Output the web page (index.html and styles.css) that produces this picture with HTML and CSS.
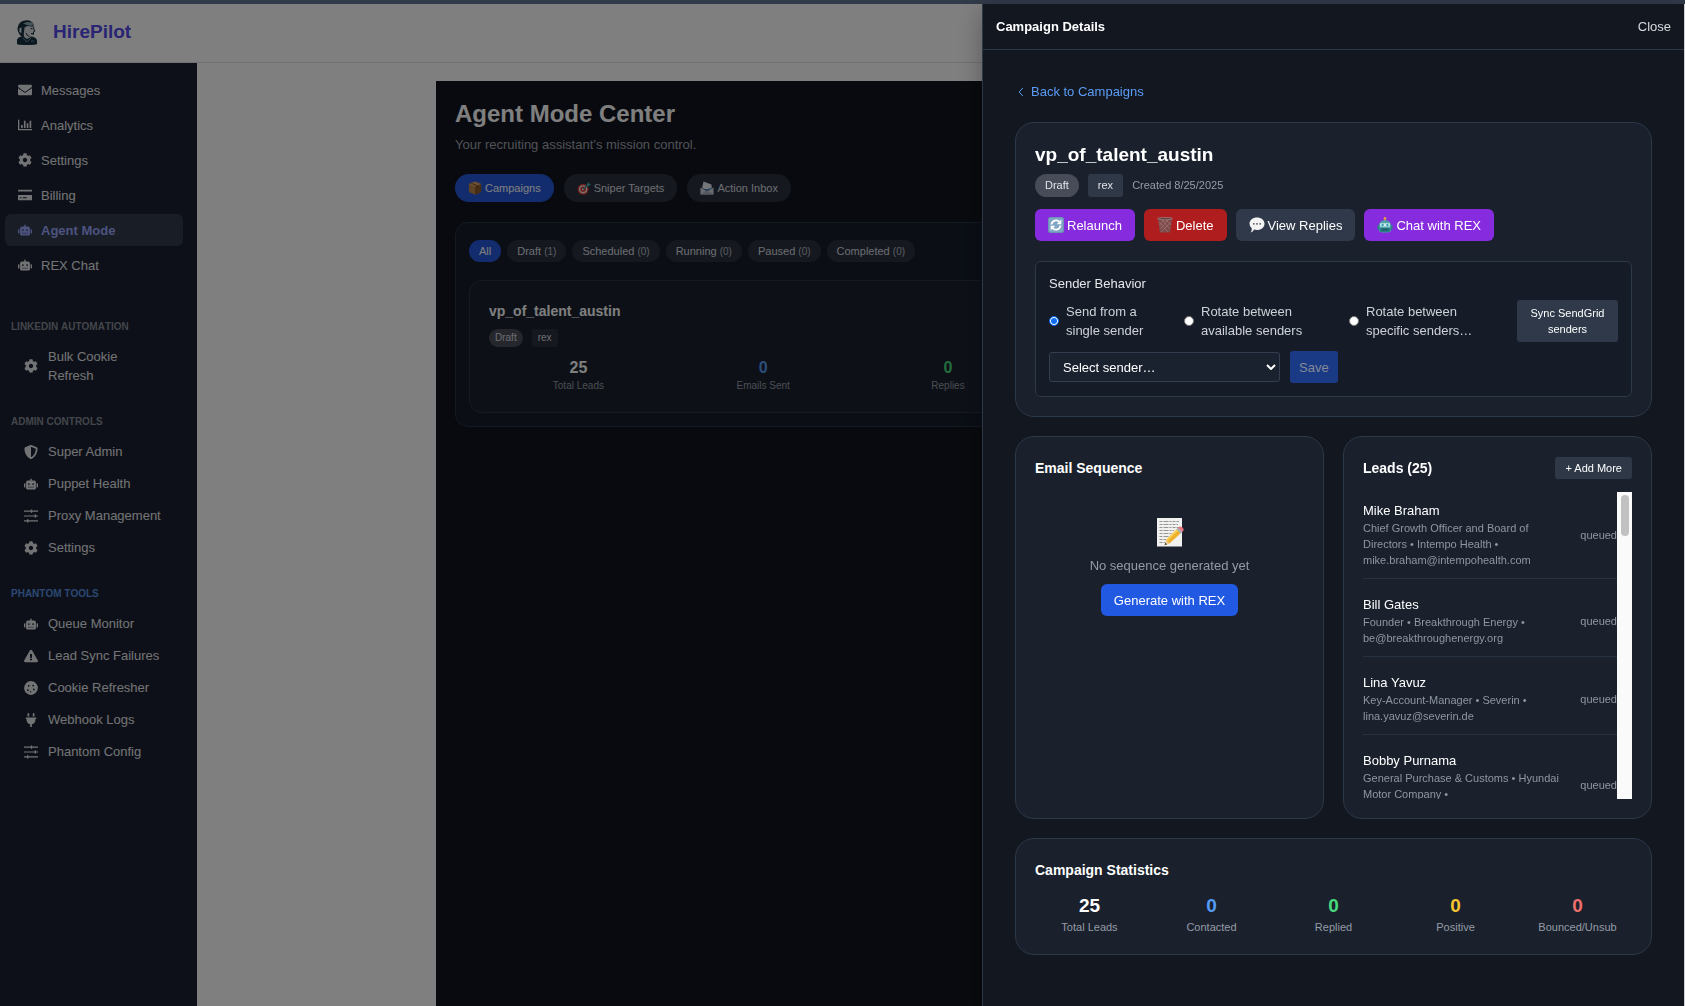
FILE: index.html
```html
<!DOCTYPE html>
<html lang="en">
<head>
<meta charset="utf-8">
<meta name="viewport" content="width=device-width, initial-scale=1">
<title>HirePilot – Agent Mode</title>
<link rel="stylesheet" href="styles.css">
</head>
<body>
<svg class="sprite" aria-hidden="true">
  <symbol id="i-mail" viewBox="0 0 512 512"><path d="M502.3 190.8c3.9-3.1 9.7-.2 9.7 4.7V400c0 26.5-21.5 48-48 48H48c-26.5 0-48-21.5-48-48V195.6c0-5 5.7-7.8 9.7-4.7 22.4 17.4 52.1 39.5 154.1 113.6 21.1 15.4 56.7 47.8 92.2 47.6 35.7.3 72-32.8 92.3-47.6 102-74.1 131.6-96.3 154-113.7zM256 320c23.2.4 56.6-29.2 73.4-41.4 132.7-96.3 142.8-104.7 173.4-128.7 5.8-4.5 9.2-11.5 9.2-18.9v-19c0-26.5-21.5-48-48-48H48c-26.5 0-48 21.5-48 48v19c0 7.4 3.4 14.3 9.2 18.9 30.6 23.9 40.7 32.4 173.4 128.7 16.8 12.2 50.2 41.8 73.4 41.4z"/></symbol>
  <symbol id="i-chart" viewBox="0 0 512 512"><path d="M0 64h48v336h464v48H24a24 24 0 0 1-24-24zM112 256h60v108h-60zM216 96h60v268h-60zM320 192h60v172h-60zM424 96h60v268h-60z"/></symbol>
  <symbol id="i-cog" viewBox="0 0 512 512"><path d="M487.4 315.7l-42.6-24.6c4.3-23.2 4.3-47 0-70.2l42.6-24.6c4.9-2.8 7.1-8.6 5.5-14-11.1-35.6-30-67.8-54.7-94.6-3.8-4.1-10-5.1-14.8-2.3L380.8 110c-17.9-15.4-38.5-27.3-60.8-35.1V25.8c0-5.6-3.9-10.5-9.4-11.7-36.7-8.2-74.3-7.8-109.2 0-5.5 1.2-9.4 6.1-9.4 11.7V75c-22.2 7.9-42.8 19.8-60.8 35.1L88.7 85.5c-4.9-2.8-11-1.9-14.8 2.3-24.7 26.7-43.6 58.9-54.7 94.6-1.7 5.4.6 11.2 5.5 14L67.3 221c-4.3 23.2-4.3 47 0 70.2l-42.6 24.6c-4.9 2.8-7.1 8.6-5.5 14 11.1 35.6 30 67.8 54.7 94.6 3.8 4.1 10 5.1 14.8 2.3l42.6-24.6c17.9 15.4 38.5 27.3 60.8 35.1v49.2c0 5.6 3.9 10.5 9.4 11.7 36.7 8.2 74.3 7.8 109.2 0 5.5-1.2 9.4-6.1 9.4-11.7v-49.2c22.2-7.9 42.8-19.8 60.8-35.1l42.6 24.6c4.9 2.8 11 1.9 14.8-2.3 24.7-26.7 43.6-58.9 54.7-94.6 1.5-5.5-.7-11.3-5.6-14.1zM256 336c-44.1 0-80-35.9-80-80s35.9-80 80-80 80 35.9 80 80-35.9 80-80 80z"/></symbol>
  <symbol id="i-card" viewBox="0 0 512 512"><path fill-rule="evenodd" d="M24 64h464a24 24 0 0 1 24 24v40H0V88a24 24 0 0 1 24-24zM0 256h512v168a24 24 0 0 1-24 24H24a24 24 0 0 1-24-24zM64 336v38h64v-38zM172 336v38h148v-38z"/></symbol>
  <symbol id="i-robot" viewBox="0 0 640 512"><path d="M32,224H64V416H32A32,32,0,0,1,0,384V256A32,32,0,0,1,32,224Zm512-48V448a64,64,0,0,1-64,64H160a64,64,0,0,1-64-64V176a80,80,0,0,1,80-80H288V32a32,32,0,0,1,64,0V96H464A80,80,0,0,1,544,176ZM264,256a40,40,0,1,0-40,40A40,40,0,0,0,264,256Zm-8,128H192v32h64Zm96,0H288v32h64ZM456,256a40,40,0,1,0-40,40A40,40,0,0,0,456,256Zm-8,128H384v32h64ZM640,256V384a32,32,0,0,1-32,32H576V224h32A32,32,0,0,1,640,256Z"/></symbol>
  <symbol id="i-shield" viewBox="0 0 512 512"><path d="M466.5 83.7l-192-80a48.15 48.15 0 0 0-36.9 0l-192 80C27.7 91.1 16 108.6 16 128c0 198.5 114.5 335.7 221.5 380.3 11.8 4.9 25.1 4.9 36.9 0C360.1 472.6 496 349.3 496 128c0-19.4-11.7-36.9-29.5-44.3zM256.1 446.3l-.1-381 175.9 73.3c-3.3 151.4-82.1 261.1-175.8 307.7z"/></symbol>
  <symbol id="i-sliders" viewBox="0 0 14 14"><path d="M0 1.6h14v1.2H0zM0 6.4h14v1.2H0zM0 11.2h14v1.2H0zM6.8 0.6h1.4v3.2H6.8zM10.6 5.4H12v3.2h-1.4zM3 10.2h1.4v3.2H3z"/></symbol>
  <symbol id="i-warn" viewBox="0 0 576 512"><path fill-rule="evenodd" d="M569.5 440c18.500 32-4.700 72-41.600 72H48c-36.900 0-60-40-41.600-72L246.400 24c18.500-32 64.700-32 83.200 0zM288 354a46 46 0 1 0 0 92 46 46 0 0 0 0-92zm-43.700-165.300l7.400 136c.4 6.300 5.700 11.300 12 11.300h48.600c6.300 0 11.600-5 12-11.300l7.400-136c.4-6.800-5-12.700-12-12.700h-63.400c-6.900 0-12.400 5.900-12 12.700z"/></symbol>
  <symbol id="i-cookie" viewBox="0 0 512 512"><path fill-rule="evenodd" d="M256 2 370 30 460 110 508 210 500 320 440 420 340 490 230 510 120 470 40 390 4 280 18 170 80 75 160 20ZM176 144a32 32 0 1 0 0 64 32 32 0 0 0 0-64zm-32 160a32 32 0 1 0 0 64 32 32 0 0 0 0-64zm96 64a24 24 0 1 0 0 48 24 24 0 0 0 0-48zm96-232a32 32 0 1 0 0 64 32 32 0 0 0 0-64zm24 140a32 32 0 1 0 0 64 32 32 0 0 0 0-64z"/></symbol>
  <symbol id="i-plug" viewBox="0 0 384 512"><path d="M320 32a32 32 0 0 0-64 0v96h64zM368 160H16a16 16 0 0 0-16 16v32a16 16 0 0 0 16 16h16v32a160 160 0 0 0 128 156.800V512h64v-99.200A160 160 0 0 0 352 256v-32h16a16 16 0 0 0 16-16v-32a16 16 0 0 0-16-16zM128 32a32 32 0 0 0-64 0v96h64z"/></symbol>
</svg>

<div class="app">
  <header class="topbar">
    <svg class="logo" viewBox="0 0 20 25" aria-hidden="true">
      <path fill="#16303f" d="M0 24v-3.500q0-2.500 3-3.500l3.500-1.500 4 2 4-1q5 .8 5.500 4V24q-1 1-10 1t-10-1z"/>
      <path fill="#d8dcde" d="M5 7q4-2.500 9-1.500l2.500 1 .5 3 1 2-1.200.8-.3 3.200h-3l-.5 2-3 1.500L5 15.500z"/>
      <path fill="#16303f" d="M.6 8Q1.500 1 9 .2q6-.4 7.800 4.500l-.6 2-6-.6-2.600 1.400-.9 6.500.5 3Q3 16.500 1.800 13q-1.500-2-1.200-5z"/>
      <path fill="#8fa9b5" d="M6 3.500 10 2l6 .6.800 2.200-3 1.200-4-1z"/>
      <path fill="#d8dcde" d="M2.500 8 4.500 7.500 4.300 13l-2-1z"/>
      <path fill="none" stroke="#16303f" d="M13.500 8.700h2M14 13.700h2.500M9 13q1 3 3.500 3.500M16.800 7v2l1 2.200-1.200.6-.3 3"/>
      <path fill="none" stroke="#7c98a6" stroke-width=".8" d="m6 18 4 4 4-4M14 21h3"/>
    </svg>
    <span class="brand">HirePilot</span>
  </header>
  <div class="body">
    <nav class="sidebar" aria-label="Main">
      <div class="nav-main">
        <a href="#"><svg class="ico"><use href="#i-mail"/></svg>Messages</a>
        <a href="#"><svg class="ico"><use href="#i-chart"/></svg>Analytics</a>
        <a href="#"><svg class="ico"><use href="#i-cog"/></svg>Settings</a>
        <a href="#"><svg class="ico"><use href="#i-card"/></svg>Billing</a>
        <a href="#" class="active"><svg class="ico"><use href="#i-robot"/></svg>Agent Mode</a>
        <a href="#"><svg class="ico"><use href="#i-robot"/></svg>REX Chat</a>
      </div>
      <section class="nav-group">
        <h2>LINKEDIN AUTOMATION</h2>
        <a href="#"><svg class="ico"><use href="#i-cog"/></svg>Bulk Cookie Refresh</a>
      </section>
      <section class="nav-group">
        <h2>ADMIN CONTROLS</h2>
        <a href="#"><svg class="ico"><use href="#i-shield"/></svg>Super Admin</a>
        <a href="#"><svg class="ico"><use href="#i-robot"/></svg>Puppet Health</a>
        <a href="#"><svg class="ico"><use href="#i-sliders"/></svg>Proxy Management</a>
        <a href="#"><svg class="ico"><use href="#i-cog"/></svg>Settings</a>
      </section>
      <section class="nav-group phantom">
        <h2>PHANTOM TOOLS</h2>
        <a href="#"><svg class="ico"><use href="#i-robot"/></svg>Queue Monitor</a>
        <a href="#"><svg class="ico"><use href="#i-warn"/></svg>Lead Sync Failures</a>
        <a href="#"><svg class="ico"><use href="#i-cookie"/></svg>Cookie Refresher</a>
        <a href="#"><svg class="ico"><use href="#i-plug"/></svg>Webhook Logs</a>
        <a href="#"><svg class="ico"><use href="#i-sliders"/></svg>Phantom Config</a>
      </section>
    </nav>
    <main class="main">
      <div class="center">
        <h1>Agent Mode Center</h1>
        <p class="subtitle">Your recruiting assistant’s mission control.</p>
        <div class="tabs">
          <button class="tab on" type="button"><svg class="emo" viewBox="0 0 16 16"><path fill="#b98249" d="m1 3.500 7-3 7 3v9l-7 3.300-7-3.300z"/><path fill="#8c5a2c" d="m8 6.500 7-3v9l-7 3.300z"/><path fill="#d3a069" d="m1 3.500 7-3 7 3-7 3z"/><path fill="#6f4420" d="m4 2.200 7.200 3v3L10 8.700V5.600L2.800 2.700z"/></svg>Campaigns</button>
          <button class="tab" type="button"><svg class="emo" viewBox="0 0 16 16"><circle cx="7" cy="9.500" r="6.300" fill="#d63a34"/><circle cx="7" cy="9.500" r="4.700" fill="#f4e9e6"/><circle cx="7" cy="9.500" r="3.200" fill="#d63a34"/><circle cx="7" cy="9.500" r="1.300" fill="#fff"/><path stroke="#2c8f96" stroke-width="1.600" d="m7 9.500 6-5.500"/><path fill="#39b3b3" d="m11 4 2.500-3 .5 2 2 .3-3 3z"/></svg>Sniper Targets</button>
          <button class="tab" type="button"><svg class="emo" viewBox="0 0 16 16"><path fill="#e8edf2" d="m4 .5 9 3.500 1 6H2z"/><path fill="#3c78b4" d="M2 7.500q5 4 12-.5l-1 4H3z"/><path fill="#d3d8de" d="M.5 7.500l7.500 4.500 7.500-4.500v8H.5z"/><path fill="#aab1ba" d="m.5 15.500 7.500-5 7.500 5z"/></svg>Action Inbox</button>
        </div>
        <section class="panel">
          <div class="filters">
            <button class="chip on" type="button">All</button>
            <button class="chip" type="button">Draft <small>(1)</small></button>
            <button class="chip" type="button">Scheduled <small>(0)</small></button>
            <button class="chip" type="button">Running <small>(0)</small></button>
            <button class="chip" type="button">Paused <small>(0)</small></button>
            <button class="chip" type="button">Completed <small>(0)</small></button>
          </div>
          <article class="campaign">
            <h2>vp_of_talent_austin</h2>
            <div class="tags"><span class="tag round">Draft</span><span class="tag">rex</span></div>
            <dl class="stats small">
              <div><dd>25</dd><dt>Total Leads</dt></div>
              <div><dd class="blue">0</dd><dt>Emails Sent</dt></div>
              <div><dd class="green">0</dd><dt>Replies</dt></div>
            </dl>
          </article>
        </section>
      </div>
    </main>
  </div>
</div>

<div class="backdrop"></div>

<aside class="drawer" aria-label="Campaign Details">
  <header class="drawer-head"><strong>Campaign Details</strong><button class="close" type="button">Close</button></header>
  <div class="drawer-body">
    <a class="back" href="#"><svg viewBox="0 0 6 10"><path d="M4.800 1 1.200 5l3.600 4"/></svg>Back to Campaigns</a>

    <section class="card">
      <h2 class="name">vp_of_talent_austin</h2>
      <div class="meta"><span class="badge round">Draft</span><span class="badge">rex</span><span>Created 8/25/2025</span></div>
      <div class="actions">
        <button class="btn purple" type="button"><svg class="emo" viewBox="0 0 16 16"><rect width="16" height="16" rx="2.500" fill="#6d93b4"/><rect x="1" y="1" width="14" height="14" rx="2" fill="#7fa6c6"/><path fill="none" stroke="#fff" stroke-width="1.800" d="M3.500 7.500A4.600 4.600 0 0 1 11.500 5M12.500 8.500A4.600 4.600 0 0 1 4.500 11"/><path fill="#fff" d="M13.300 2.600v4.600H8.700zM2.700 13.400V8.800h4.600z"/></svg>Relaunch</button>
        <button class="btn red" type="button"><svg class="emo" viewBox="0 0 16 16"><path fill="#7d4b4b" d="M1 1.500h14l-1.800 14H2.800z"/><path stroke="#b08585" stroke-width=".5" d="m2 5 9 10M5 3l8 9M9 3l5 5M14 5 4 15M11 3l-8 9M7 3 2.500 8"/><ellipse cx="8" cy="1.600" rx="7.500" ry="1.200" fill="#5f4444" stroke="#a98484" stroke-width=".7"/></svg>Delete</button>
        <button class="btn slate" type="button"><svg class="emo" viewBox="0 0 16 16"><path fill="#f3f3f3" d="M8 .5c4.300 0 7.500 2.700 7.500 6.200S12.300 13 8 13c-1 0-2-.1-2.800-.4Q4 15 1.500 15.500 3 13.500 2.800 11.400 .5 9.700.5 6.700C.5 3.200 3.700.5 8 .5z"/><g fill="#555"><circle cx="4.800" cy="6.800" r=".9"/><circle cx="8" cy="6.800" r=".9"/><circle cx="11.200" cy="6.800" r=".9"/></g></svg>View Replies</button>
        <button class="btn purple" type="button"><svg class="emo" viewBox="0 0 16 16"><path fill="#c8873a" d="M7.300 1h1.400v3H7.300z"/><circle cx="8" cy="1.400" r="1.300" fill="#e4a03c"/><path fill="#4fa3a8" d="M2 8Q2.500 3.200 8 3.200T14 8v6q-1 1.600-6 1.600T2 14z"/><path fill="#2b7f86" d="M.5 8h1.700v4.500H.5zM13.800 8h1.700v4.500h-1.700zM2.500 11h11v3q-1 1.200-5.500 1.200T2.500 14z"/><path fill="#cfeff0" d="M3.200 6.300h9.600v3.300H3.200z"/><g fill="#3a9fb0"><circle cx="5.600" cy="8" r="1.200"/><circle cx="10.400" cy="8" r="1.200"/></g><path fill="#1d5a68" d="M4.500 11.800h7v1.600h-7z"/></svg>Chat with REX</button>
      </div>
      <form class="sender">
        <h3>Sender Behavior</h3>
        <div class="sender-row">
          <label><input type="radio" name="mode" checked><span>Send from a single sender</span></label>
          <label><input type="radio" name="mode"><span>Rotate between available senders</span></label>
          <label><input type="radio" name="mode"><span>Rotate between specific senders…</span></label>
          <button class="sync" type="button">Sync SendGrid senders</button>
        </div>
        <div class="sender-pick">
          <div class="select"><select aria-label="Sender"><option>Select sender…</option></select><svg viewBox="0 0 10 6"><path d="m1 1 4 4 4-4"/></svg></div>
          <button class="save" type="submit" disabled>Save</button>
        </div>
      </form>
    </section>

    <div class="cols">
      <section class="card">
        <h3 class="card-title">Email Sequence</h3>
        <div class="empty">
          <svg viewBox="0 0 28 30" aria-hidden="true"><path fill="#f1f1ef" d="M1 1h25v28.500H1z"/><path stroke="#8b8b8b" stroke-width=".9" stroke-dasharray="3 1 5 1 2 1" d="M3.500 4.500H23M3.500 7.500H22M3.500 10.500H23M3.500 13.500H18M3.500 16.500H16M3.500 19.500H13M3.500 22.500H10M3.500 25.500H9"/><path fill="#f0b22c" d="m21.500 11.500 4 4-12 11-4.500 1.500 1-5z"/><path fill="#fbd25c" d="m21.500 11.500 1.300 1.300L11 24l-1-1z"/><path fill="#e9cfa4" d="m10 23 3.500 3.500L9 28z"/><path fill="#333" d="m9.500 25.700 1.600 1.600L8.500 28.300z"/><path fill="#9fb0bd" d="m20.500 12.300 1.600-1.600 4.200 4.200-1.700 1.500z"/><path fill="#e8727c" d="m22 10.800 1.300-1q1.600-.6 3.200.8 1.700 1.700 1 3l-1.200 1.300z"/></svg>
          <p>No sequence generated yet</p>
          <button class="btn blue-btn" type="button">Generate with REX</button>
        </div>
      </section>
      <section class="card">
        <div class="card-row"><h3 class="card-title">Leads (25)</h3><button class="add" type="button">+ Add More</button></div>
        <div class="lead-box">
          <ul class="leads">
            <li><div><b>Mike Braham</b><p>Chief Growth Officer and Board of Directors • Intempo Health • mike.braham@intempohealth.com</p></div><span>queued</span></li>
            <li><div><b>Bill Gates</b><p>Founder • Breakthrough Energy • be@breakthroughenergy.org</p></div><span>queued</span></li>
            <li><div><b>Lina Yavuz</b><p>Key-Account-Manager • Severin • lina.yavuz@severin.de</p></div><span>queued</span></li>
            <li><div><b>Bobby Purnama</b><p class="tall">General Purchase &amp; Customs • Hyundai Motor Company •</p></div><span>queued</span></li>
          </ul>
          <div class="scroll"><i></i></div>
        </div>
      </section>
    </div>

    <section class="card">
      <h3 class="card-title">Campaign Statistics</h3>
      <dl class="stats">
        <div><dd>25</dd><dt>Total Leads</dt></div>
        <div><dd class="blue">0</dd><dt>Contacted</dt></div>
        <div><dd class="green">0</dd><dt>Replied</dt></div>
        <div><dd class="yellow">0</dd><dt>Positive</dt></div>
        <div><dd class="coral">0</dd><dt>Bounced/Unsub</dt></div>
      </dl>
    </section>
  </div>
</aside>
</body>
</html>
```
FILE: styles.css
```css
* { box-sizing: border-box; margin: 0; padding: 0; }
body {
  font: 13px/19px "Liberation Sans", Arial, Helvetica, sans-serif;
  color: #fff;
  background: #313a49;
  height: 100vh;
  overflow: hidden;
}
button, select, input { font: inherit; color: inherit; border: 0; }
a { color: inherit; text-decoration: none; }
ul { list-style: none; }
.sprite { display: none; }

/* page shell */
.app { height: 100vh; border-top: 4px solid #313a49; display: flex; flex-direction: column; background: #fff; }
.topbar { height: 59px; flex: none; display: flex; align-items: center; gap: 16px; padding: 0 17px 2px; border-bottom: 1px solid #e2e4e8; }
.logo { width: 20px; height: 25px; }
.brand { font-size: 19px; line-height: 26px; font-weight: 700; color: #5349e8; }
.body { flex: 1; display: flex; min-height: 0; }

/* sidebar */
.sidebar { width: 197px; flex: none; background: #1b2130; color: #e5e7eb; padding: 11px 14px 0 5px; }
.sidebar a { display: flex; align-items: center; gap: 10px; padding: 6px 13px; border-radius: 6px; }
.nav-main { display: flex; flex-direction: column; gap: 3px; }
.sidebar .nav-main a { min-height: 32px; gap: 9px; }
.sidebar .active { background: #323b4a; color: #9aa6ff; font-weight: 700; }
.ico { width: 14px; height: 14px; flex: none; fill: currentColor; }
.nav-group { display: flex; flex-direction: column; gap: 1px; margin: 25px 6px 0 6px; }
.nav-main + .nav-group { margin-top: 40px; }
.nav-group h2 { font-size: 10px; line-height: 12px; font-kerning: none; color: #868b96; margin-bottom: 7px; }
.phantom h2 { color: #5890e0; }

/* main area behind the drawer */
.main { flex: 1; display: flex; justify-content: center; padding: 18px 0 0 14px; }
.center { width: 100%; max-width: 1024px; background: #11151e; padding: 19px; }
.center h1 { font-size: 24px; line-height: 28px; }
.subtitle { color: #a0a4ad; margin-top: 7px; }
.tabs { display: flex; gap: 10px; margin: 20px 0; }
.tab { display: flex; align-items: center; gap: 3px; height: 28px; padding: 0 13px; border-radius: 14px; font-size: 11px; background: #2b323f; color: #d8dbe0; }
.tab .emo { width: 14px; height: 14px; }
.tab.on, .chip.on { background: #2659dd; color: #fff; }
.emo { width: 16px; height: 16px; flex: none; }
.panel { border: 1px solid #263445; border-radius: 13px; background: #161d2b; padding: 17px 13px 13px; }
.filters { display: flex; gap: 6px; margin-bottom: 18px; }
.chip { height: 22px; padding: 0 10px; border-radius: 11px; font-size: 11px; line-height: 16px; background: #2b323f; color: #d8dbe0; }
.chip small { font-size: 10px; opacity: .8; }
.campaign { border: 1px solid #29374a; border-radius: 13px; background: #1b222f; padding: 20px 19px; }
.campaign h2 { font-size: 14px; line-height: 20px; }
.tags { display: flex; gap: 9px; margin: 8px 0 10px; }
.tag { font-size: 10px; line-height: 18px; padding: 0 6px; border-radius: 3px; background: #2b323f; color: #d8dbe0; }
.tag.round { border-radius: 9px; background: #4b4f5a; }
.stats { display: grid; grid-template-columns: repeat(5, 1fr); gap: 13px; text-align: center; }
.stats dd { font-size: 19px; line-height: 26px; font-weight: 700; }
.stats dt { font-size: 11px; line-height: 16px; color: #959ba6; }
.stats.small { gap: 6px; }
.stats.small dd { font-size: 16px; line-height: 22px; }
.stats.small dt { font-size: 10px; line-height: 13px; }
.stats .blue { color: #569bf5; }
.stats .green { color: #48d97b; }
.stats .yellow { color: #f6c332; }
.stats .coral { color: #ee6e6c; }

.backdrop { position: fixed; inset: 4px 0 0; background: rgba(0, 0, 0, .5); }

/* drawer */
.drawer { position: fixed; top: 4px; right: 0; bottom: 0; width: 703px; background: #131720; border-left: 1px solid #2c3748; border-right: 1px solid #cfd1d4; box-shadow: 0 8px 24px rgba(0, 0, 0, .3); }
.drawer-head { height: 46px; display: flex; align-items: center; justify-content: space-between; padding: 0 13px; border-bottom: 1px solid #2c3748; }
.close { background: none; color: #d8dbe0; }
.drawer-body { padding: 32px; display: flex; flex-direction: column; gap: 19px; }
.back { align-self: flex-start; display: flex; align-items: center; gap: 7px; margin: 0 0 2px 3px; color: #5b9cf6; }
.back svg { width: 6px; height: 10px; fill: none; stroke: currentColor; }
.card { border: 1px solid #2c3949; border-radius: 19px; background: #1a212d; padding: 19px; min-width: 0; }
.name { font-size: 19px; line-height: 26px; }
.meta { display: flex; align-items: center; gap: 9px; margin: 6px 0 12px; font-size: 11px; line-height: 23px; color: #979ca7; }
.badge { padding: 0 10px; border-radius: 3px; background: #2f3847; color: #e0e3e8; }
.badge.round { border-radius: 12px; background: #474c58; }
.actions { display: flex; gap: 9px; }
.btn { display: flex; align-items: center; gap: 3px; height: 32px; padding: 0 13px; border-radius: 6px; }
.purple { background: #872bdf; }
.red { background: #b01d1e; }
.slate { background: #2f3949; }
.blue-btn { background: #2159e2; }

.sender { margin-top: 20px; border: 1px solid #2c3949; border-radius: 6px; background: #151b27; padding: 12px 13px 13px; }
.sender h3 { font-size: 13px; font-weight: 400; color: #e5e7eb; margin-bottom: 7px; }
.sender-row { display: grid; grid-template-columns: 119fr 149fr 152fr 101px; gap: 16px; align-items: center; color: #ced2d8; }
.sender-row label { display: flex; align-items: center; gap: 7px; padding-right: 10px; }
.sender-row input { appearance: none; width: 10px; height: 10px; flex: none; border-radius: 50%; background: #fff; border: 1px solid #767676; }
.sender-row input:checked { background: #0d6cf2; border: 1px solid #0d6cf2; box-shadow: inset 0 0 0 1px #fff; }
.sync { height: 42px; padding: 0 10px; border-radius: 3px; background: #2f3949; color: #fff; font-size: 11px; line-height: 16px; }
.sender-pick { display: flex; align-items: center; gap: 10px; margin-top: 9px; }
.select { width: 231px; display: grid; align-items: center; }
.select > * { grid-area: 1 / 1; }
.select select { appearance: none; height: 30px; padding: 0 13px; border: 1px solid #333f50; border-radius: 3px; background: #1b222f; }
.select svg { justify-self: end; margin-right: 4px; width: 10px; height: 6px; fill: none; stroke: #fff; stroke-width: 2; pointer-events: none; }
.save { height: 32px; padding: 0 9px; border-radius: 3px; background: #1a3a86; color: #858a95; }

.cols { display: grid; grid-template-columns: 1fr 1fr; gap: 19px; }
.card-title { font-size: 14px; line-height: 24px; }
.card-row { display: flex; justify-content: space-between; align-items: center; }
.add { height: 22px; padding: 0 10px; border-radius: 3px; background: #2f3847; font-size: 11px; }
.empty { display: flex; flex-direction: column; align-items: center; gap: 9px; padding-top: 37px; color: #959ba6; }
.empty svg { width: 28px; height: 30px; }
.empty button { color: #fff; }
.lead-box { display: flex; height: 307px; margin-top: 12px; overflow: hidden; }
.leads { flex: 1; min-width: 0; display: flex; flex-direction: column; gap: 7px; }
.leads li { display: flex; flex: none; align-items: center; justify-content: space-between; gap: 13px; padding: 9px 0 10px; border-bottom: 1px solid #263141; font-size: 11px; line-height: 16px; color: #8f96a3; }
.leads b { display: block; font-size: 13px; line-height: 19px; font-weight: 400; color: #fff; }
.leads .tall { min-height: 48px; }
.scroll { width: 15px; background: #fafafa; padding: 3px 3px 0 4px; }
.scroll i { display: block; height: 41px; border-radius: 4px; background: #c1c1c1; }
.card > .stats { margin-top: 11px; }
```
